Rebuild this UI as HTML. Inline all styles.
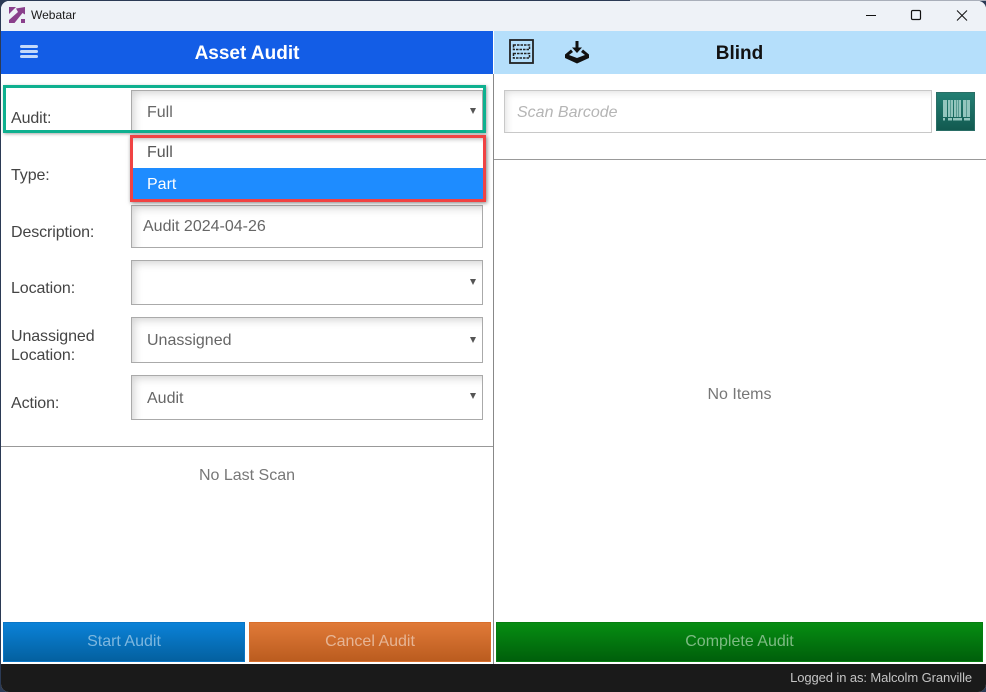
<!DOCTYPE html>
<html>
<head>
<meta charset="utf-8">
<style>
html,body{margin:0;padding:0;width:986px;height:692px;overflow:hidden;background:#2b3a55;}
*{box-sizing:border-box;}
body{font-family:"Liberation Sans",sans-serif;position:relative;}
.a{position:absolute;}
#corner{left:630px;top:0;width:356px;height:1px;background:#a9afba;}
.lbl{position:absolute;left:11px;font-size:16px;line-height:19px;color:#444;letter-spacing:-.1px;}
.box{position:absolute;left:131px;width:352px;background:#fff;border:1px solid #aaa;box-shadow:inset 8px 8px 9px -6px rgba(0,0,0,.18);font-size:16px;color:#666;}
.box span{position:absolute;left:15px;}
.arr{position:absolute;left:338px;width:0;height:0;border-left:3.500px solid transparent;border-right:3.500px solid transparent;border-top:6px solid #555;}
.btn{position:absolute;top:622px;height:40px;font-size:16px;line-height:38px;text-align:center;border:1px solid;}
</style>
</head>
<body>
<div class="a" id="corner"></div>
<div class="a" style="left:0;top:0;width:986px;height:692px;">
  <div class="a" style="left:1px;top:1px;width:985px;height:691px;background:#fff;border-radius:8px;overflow:hidden;"></div>

  <!-- title bar -->
  <div class="a" style="left:1px;top:1px;width:985px;height:30px;background:#eef2f7;border-radius:8px 8px 0 0;"></div>
  <svg class="a" style="left:9px;top:7px;" width="16" height="16" viewBox="0 0 16 16">
    <path d="M0 0H7L0 7ZM0 16V13L9 5 7 1.500 16 0V7.500L13.500 6 5.500 16ZM12 12H16V16H12Z" fill="#8a3f8c"/>
  </svg>
  <div class="a" style="left:31px;top:8px;font-size:12px;line-height:15px;color:#1a1a1a;">Webatar</div>
  <svg class="a" style="left:860px;top:5px;" width="120" height="20" viewBox="0 0 120 20" fill="none" stroke="#111" stroke-width="1">
    <path d="M6 10.500H16"/>
    <rect x="51.500" y="5.500" width="9" height="9" rx="1.200" stroke-width="1.200"/>
    <path d="M97 5.500 107 15.500M107 5.500 97 15.500"/>
  </svg>

  <!-- headers -->
  <div class="a" style="left:1px;top:31px;width:492px;height:43px;background:#135de6;"></div>
  <div class="a" style="left:494px;top:31px;width:492px;height:43px;background:#b5dffb;"></div>
  <div class="a" style="left:20px;top:45px;width:18px;height:3px;border-radius:1.500px;background:#c4d9fa;"></div>
  <div class="a" style="left:20px;top:50px;width:18px;height:3px;border-radius:1.500px;background:#c4d9fa;"></div>
  <div class="a" style="left:20px;top:55px;width:18px;height:3px;border-radius:1.500px;background:#c4d9fa;"></div>
  <div class="a" style="left:1px;top:42px;width:492px;text-align:center;font-size:19px;line-height:24px;font-weight:bold;color:#fff;">Asset Audit</div>
  <div class="a" style="left:494px;top:42px;width:491px;text-align:center;font-size:19px;line-height:24px;font-weight:bold;color:#111;">Blind</div>

  <svg class="a" style="left:509px;top:39px;" width="25" height="25" viewBox="0 0 25 25" fill="none" stroke="#222">
    <rect x="1" y="1" width="23" height="23" stroke-width="1.800"/>
    <path d="M4.500 6H20.500V10.500H4.500ZM4.500 14.500H20.500V19H4.500Z" stroke-width="1.500" stroke-dasharray="2.500 1"/>
  </svg>
  <svg class="a" style="left:565px;top:41px;" width="25" height="23" viewBox="0 0 25 23">
    <path d="M10.500 0h3v6.500h3.500L12 12 7 6.500H10.500Z" fill="#111"/>
    <path d="M6 8.500 0 13.500V17L12 22.500 24 17V13.500L18 8.500 16 11 20 14 12 17 4 14 8 11Z" fill="#111"/>
  </svg>

  <!-- divider -->
  <div class="a" style="left:493px;top:74px;width:1px;height:590px;background:#888;"></div>

  <!-- form -->
  <div class="box" style="top:90px;height:42px;"><span style="top:12px;line-height:19px;">Full</span><div class="arr" style="top:17px;"></div></div>
  <div class="lbl" style="top:109px;">Audit:</div>
  <div class="lbl" style="top:166px;">Type:</div>

  <div class="box" style="top:205px;height:43px;"><span style="left:11px;top:11px;line-height:19px;">Audit 2024-04-26</span></div>
  <div class="lbl" style="top:223px;">Description:</div>

  <div class="box" style="top:260px;height:45px;"><div class="arr" style="top:18px;"></div></div>
  <div class="lbl" style="top:279px;">Location:</div>

  <div class="box" style="top:317px;height:46px;"><span style="top:13px;line-height:19px;">Unassigned</span><div class="arr" style="top:19px;"></div></div>
  <div class="lbl" style="top:327px;">Unassigned<br>Location:</div>

  <div class="box" style="top:375px;height:45px;"><span style="top:13px;line-height:19px;">Audit</span><div class="arr" style="top:17px;"></div></div>
  <div class="lbl" style="top:394px;">Action:</div>

  <!-- annotation boxes -->
  <div class="a" style="left:3px;top:85px;width:483px;height:48px;border:3px solid #0fb08f;box-shadow:1px 1px 3px rgba(0,0,0,.35);"></div>
  <div class="a" style="left:130px;top:135px;width:356px;height:67px;border:3px solid #f04343;background:#fff;box-shadow:1px 1px 4px rgba(0,0,0,.5);"></div>
  <div class="a" style="left:133px;top:138px;width:350px;height:30px;background:#fff;box-shadow:inset 0 5px 5px -4px rgba(0,0,0,.3);font-size:16px;line-height:30px;color:#555;padding-left:14px;">Full</div>
  <div class="a" style="left:133px;top:168px;width:350px;height:31px;background:#1e8cff;font-size:16px;line-height:33px;color:#fff;padding-left:14px;">Part</div>

  <div class="a" style="left:1px;top:446px;width:492px;height:1px;background:#999;"></div>
  <div class="a" style="left:1px;top:466px;width:492px;text-align:center;font-size:16px;line-height:19px;color:#777;">No Last Scan</div>

  <!-- right panel -->
  <div class="a" style="left:504px;top:90px;width:428px;height:43px;background:#fff;border:1px solid #c8c8c8;box-shadow:inset 7px 7px 8px -6px rgba(0,0,0,.14);padding:12px 12px;font-size:16px;line-height:19px;font-style:italic;color:#b5b5b5;">Scan Barcode</div>
  <div class="a" style="left:936px;top:92px;width:39px;height:39px;background:linear-gradient(#237f73,#125a50);border:1px solid #2a6e66;"></div>
  <svg class="a" style="left:943px;top:100px;" width="27" height="21" viewBox="0 0 27 21" fill="#93c5bd">
    <path d="M0 0h4v17H0ZM5 0h2v17H5ZM7.500 0h2.500v17H7.500ZM11 0h2v17h-2ZM13.500 0h1.500v17h-1.500ZM15.500 0h2.500v17h-2.500ZM20 0h3v17h-3ZM23.500 0h3.500v17h-3.500ZM0 18h2V20.500H0ZM5 18h4V20.500H5ZM10 18h9V20.500H10ZM21 18h6V20.500H21Z"/>
  </svg>
  <div class="a" style="left:494px;top:159px;width:492px;height:1px;background:#999;"></div>
  <div class="a" style="left:494px;top:385px;width:491px;text-align:center;font-size:16px;line-height:19px;color:#777;">No Items</div>

  <!-- buttons -->
  <div class="btn" style="left:3px;width:242px;background:linear-gradient(#0b82d8,#03609f);border-color:#0a76c6;color:#7db7df;">Start Audit</div>
  <div class="btn" style="left:249px;width:242px;background:linear-gradient(#e07a38,#bb5c1f);border-color:#d96f2c;color:#e6b595;">Cancel Audit</div>
  <div class="btn" style="left:496px;width:487px;background:linear-gradient(#068d12,#005f0b);border-color:#067d10;color:#7dbb83;">Complete Audit</div>

  <!-- footer -->
  <div class="a" style="left:1px;top:664px;width:985px;height:28px;background:#1a1a1a;border-radius:0 0 8px 8px;"></div>
  <div class="a" style="right:14px;top:669px;font-size:13px;line-height:17px;letter-spacing:-.1px;color:#c4c4c4;">Logged in as: Malcolm Granville</div>
</div>
</body>
</html>
